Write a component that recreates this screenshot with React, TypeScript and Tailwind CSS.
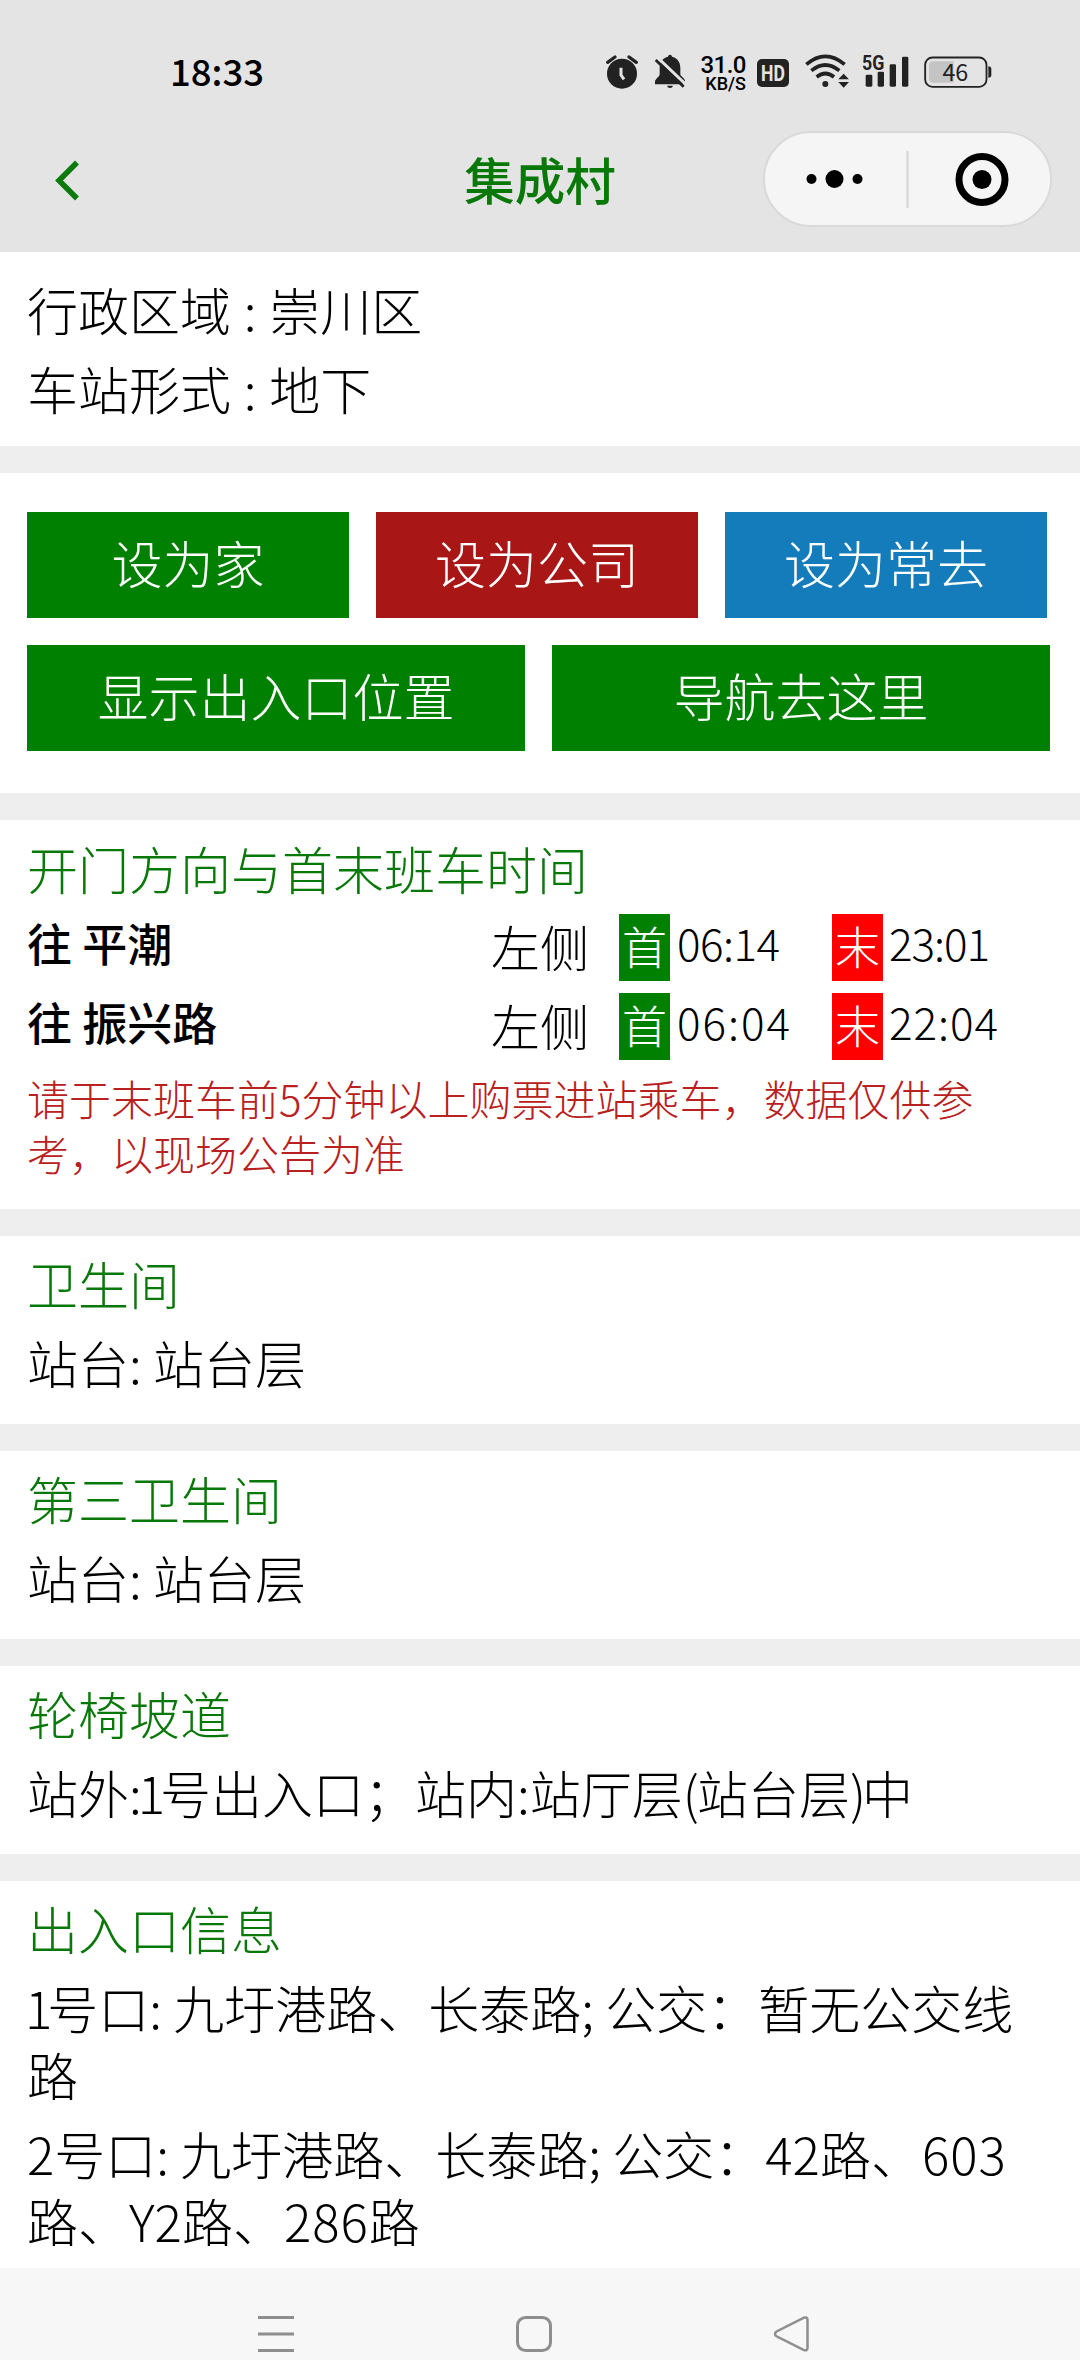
import React from 'react';

const directions = [
  { name: '往 平潮', side: '左侧', first: '06:14', last: '23:01', firstSpacing: 'tracking-[-0.500px]', lastSpacing: 'tracking-[-1px]' },
  { name: '往 振兴路', side: '左侧', first: '06:04', last: '22:04', firstSpacing: 'tracking-[2px]', lastSpacing: 'tracking-[1px]' },
];

function StatusBar() {
  return (
    <div className="flex h-[108px] items-start pt-[53px] pl-[170px] text-[#222]">
      <span className="w-[435px] text-[36.500px] leading-[36px] font-medium text-black font-['Noto_Sans_CJK_SC',sans-serif]">18:33</span>

      {/* Alarm */}
      <svg className="h-10 w-[34px] shrink-0" viewBox="135 70 102 120">
        <circle cx="186" cy="132" r="45" fill="#222" />
        <path d="M143 98l22-16M229 98l-22-16" stroke="#222" strokeWidth="10" strokeLinecap="round" />
        <path d="M183 114v22l9 13" stroke="#e4e4e4" strokeWidth="9" fill="none" />
      </svg>

      {/* Muted bell */}
      <svg className="ml-[15px] h-10 w-[33px] shrink-0" viewBox="282 70 99 120">
        <path d="M330 75c4 0 6 3 6 6c16 4 25 16 25 33v20c0 6 14 12 14 20v10h-90v-8c0-8 14-15 14-22v-20c0-17 9-29 25-33c0-3 2-6 6-6z" fill="#222" />
        <path d="M321 168h18q-2 7-9 7t-9-7z" fill="#222" />
        <path d="M292 83l90 86" stroke="#e4e4e4" strokeWidth="9" />
        <path d="M287 91l84 80" stroke="#222" strokeWidth="8" />
      </svg>

      <div className="ml-[12px] flex w-[47px] flex-col items-end font-medium text-black font-['Roboto',sans-serif]">
        <span className="text-[24px] leading-[24px] tracking-[-0.5px] whitespace-nowrap">31.0</span>
        <span className="text-[18px] leading-[14px] whitespace-nowrap">KB/S</span>
      </div>

      <div className="mt-[6px] ml-[11px] flex h-7 w-8 items-center justify-center rounded-[5px] bg-[#222] text-[22px] font-bold text-[#e4e4e4] font-['Roboto',sans-serif]">
        <span className="scale-x-80">HD</span>
      </div>

      {/* Wifi */}
      <svg className="ml-[16px] h-10 w-[44px] shrink-0" viewBox="733 70 132 120">
        <g stroke="#222" strokeWidth="11" fill="none">
          <path d="M737 104q57-48 115 0" />
          <path d="M752 123q42-34 84 0" />
          <path d="M768 142q26-21 52 0" />
        </g>
        <circle cx="794" cy="163" r="9" fill="#222" />
        <path d="M833 149l16-17l16 17zM833 157l16 17l16-17z" fill="#222" />
      </svg>

      {/* Signal */}
      <svg className="ml-[13px] h-10 w-[47px] shrink-0" viewBox="905 70 141 120">
        <g fill="#222">
          <rect x="916" y="135" width="20" height="36" rx="4" />
          <rect x="952" y="126" width="19" height="45" rx="4" />
          <rect x="988" y="104" width="19" height="67" rx="4" />
          <rect x="1025" y="81" width="19" height="90" rx="4" />
        </g>
        <text x="905" y="120" fontSize="58" fontWeight="700" fill="#222" textLength="67" lengthAdjust="spacingAndGlyphs" className="font-['Roboto',sans-serif]">5G</text>
      </svg>

      {/* Battery */}
      <svg className="ml-[15px] h-10 w-[68px] shrink-0" viewBox="1091 70 204 120">
        <rect x="1094.500" y="83.500" width="184" height="88" rx="22" fill="none" stroke="#222" strokeWidth="5.500" />
        <path d="M1118 95h62v64h-62q-12 0-12-12v-40q0-12 12-12z" fill="#c4c4c4" />
        <path d="M1284 110q9 0 9 8v18q0 8-9 8z" fill="#222" />
        <text x="1185" y="153" fontSize="70" fontWeight="400" textAnchor="middle" fill="#222" className="font-['Noto_Sans_CJK_SC',sans-serif]">46</text>
      </svg>
    </div>
  );
}

function NavBar() {
  return (
    <div className="relative flex h-[144px] items-start justify-between pt-[23px] pr-[28px] pl-[52px]">
      <svg className="mt-[29px] h-[42px] w-7" viewBox="0 0 28 42">
        <path d="M25 2.500L7 20.500l18 18" fill="none" stroke="#0a7a0a" strokeWidth="5.500" />
      </svg>
      <h1 className="absolute inset-x-0 top-[40px] text-center text-[50.500px] leading-[60px] font-medium text-[#087808]">集成村</h1>
      <div className="flex h-24 w-[289px] items-center rounded-full border-2 border-[#d9d9d9] bg-[#f5f5f5]">
        <svg className="h-[92px] w-[285px]" viewBox="0 0 285 92">
          <circle cx="46.500" cy="46" r="5" />
          <circle cx="69.500" cy="46" r="9" />
          <circle cx="92.500" cy="46" r="5" />
          <path d="M142.500 18v57" stroke="#d4d4d4" strokeWidth="2" />
          <circle cx="217" cy="46.500" r="23" fill="none" stroke="#000" strokeWidth="7" />
          <circle cx="217" cy="46.500" r="9.500" />
        </svg>
      </div>
    </div>
  );
}

function Section({ title, children }: { title: string; children: React.ReactNode }) {
  return (
    <section className="shrink-0 bg-white px-[27px] pt-[14px] pb-7">
      <h2 className="mb-3 text-[#087808]">{title}</h2>
      {children}
    </section>
  );
}

function Button({ color, children }: { color: string; children: React.ReactNode }) {
  return <button className={`h-[106px] flex-1 pb-[5px] text-white ${color}`}>{children}</button>;
}

export default function App() {
  return (
    <div className="flex h-[2360px] w-[1080px] flex-col overflow-hidden bg-[#eee] text-[51px] leading-[67px] font-light text-black font-['Noto_Sans_CJK_SC',sans-serif]">
      <header className="h-[252px] shrink-0 bg-[#e4e4e4]">
        <StatusBar />
        <NavBar />
      </header>

      <main className="flex h-[2016px] shrink-0 flex-col gap-[27px] overflow-hidden">
        <section className="h-[194px] shrink-0 bg-white px-[27px] pt-[24px] [word-spacing:1.5px]">
          <p className="mb-3">行政区域 : 崇川区</p>
          <p>车站形式 : 地下</p>
        </section>

        <section className="flex h-[320px] shrink-0 flex-col gap-[27px] bg-white pt-[39px] pl-[27px]">
          <div className="flex w-[1020px] gap-[27px]">
            <Button color="bg-[#008000]">设为家</Button>
            <Button color="bg-[#a81616]">设为公司</Button>
            <Button color="bg-[#147cba]">设为常去</Button>
          </div>
          <div className="flex w-[1023px] gap-[27px]">
            <Button color="bg-[#008000]">显示出入口位置</Button>
            <Button color="bg-[#008000]">导航去这里</Button>
          </div>
        </section>

        <section className="h-[389px] shrink-0 bg-white px-[27px] pt-[15px]">
          <h2 className="mb-3 text-[#087808]">开门方向与首末班车时间</h2>
          {directions.map((d) => (
            <div key={d.name} className="mb-3 flex h-[67px]">
              <span className="w-[464px] text-[45px] leading-[58px] font-medium">{d.name}</span>
              <span className="w-[128px] text-[49px] leading-[64px]">{d.side}</span>
              <span className="w-[51px] bg-[#008000] text-center text-[45px] leading-[64px] text-white">首</span>
              <span className={`w-[162px] pl-[7px] text-[44px] leading-[57px] ${d.firstSpacing}`}>{d.first}</span>
              <span className="w-[51px] bg-[#f00] text-center text-[45px] leading-[64px] text-white">末</span>
              <span className={`pl-[6px] text-[44px] leading-[57px] ${d.lastSpacing}`}>{d.last}</span>
            </div>
          ))}
          <p className="-mt-[2px] text-[42px] leading-[55px] text-[#b92020]">
            请于末班车前5分钟以上购票进站乘车，数据仅供参
            <br />
            考，以现场公告为准
          </p>
        </section>

        <Section title="卫生间">
          <p>站台: 站台层</p>
        </Section>

        <Section title="第三卫生间">
          <p>站台: 站台层</p>
        </Section>

        <Section title="轮椅坡道">
          <p className="whitespace-nowrap">
            站外:<span className="-ml-1 tracking-[-5px]">1</span>号出入口；站内:站厅层
            <span className="tracking-[-2px]">(</span>站台层<span className="tracking-[-4px]">)</span>中
          </p>
        </Section>

        <Section title="出入口信息">
          <p className="mb-3 whitespace-nowrap">
            <span className="-ml-[2px] tracking-[-5px]">1</span>号口: 九圩港路、长泰路; 公交：暂无公交线
            <br />路
          </p>
          <p className="whitespace-nowrap">
            2号口: 九圩港路、长泰路; 公交：42路、<span className="tracking-[1px]">603</span>
            <br />
            路、Y2路、<span className="tracking-[1px]">286</span>路
          </p>
        </Section>
      </main>

      {/* System navigation */}
      <footer className="flex h-[92px] shrink-0 bg-[#f7f7f7] pt-[48px] pl-[258px]">
        <svg className="h-9 w-[551px]" viewBox="0 0 551 36" fill="none" stroke="#8e8e8e">
          <path d="M0 1.500h36M0 18h36M0 34.500h36" strokeWidth="3" />
          <rect x="259.500" y="1.500" width="33" height="33" rx="8" strokeWidth="3" />
          <path d="M518.500 15.500L545.500 1.800Q549.500 0.500 549.500 4V32Q549.500 35.500 545.500 33.800L518.500 20.300Q515.500 18 518.500 15.500z" strokeWidth="2.500" />
        </svg>
      </footer>
    </div>
  );
}
